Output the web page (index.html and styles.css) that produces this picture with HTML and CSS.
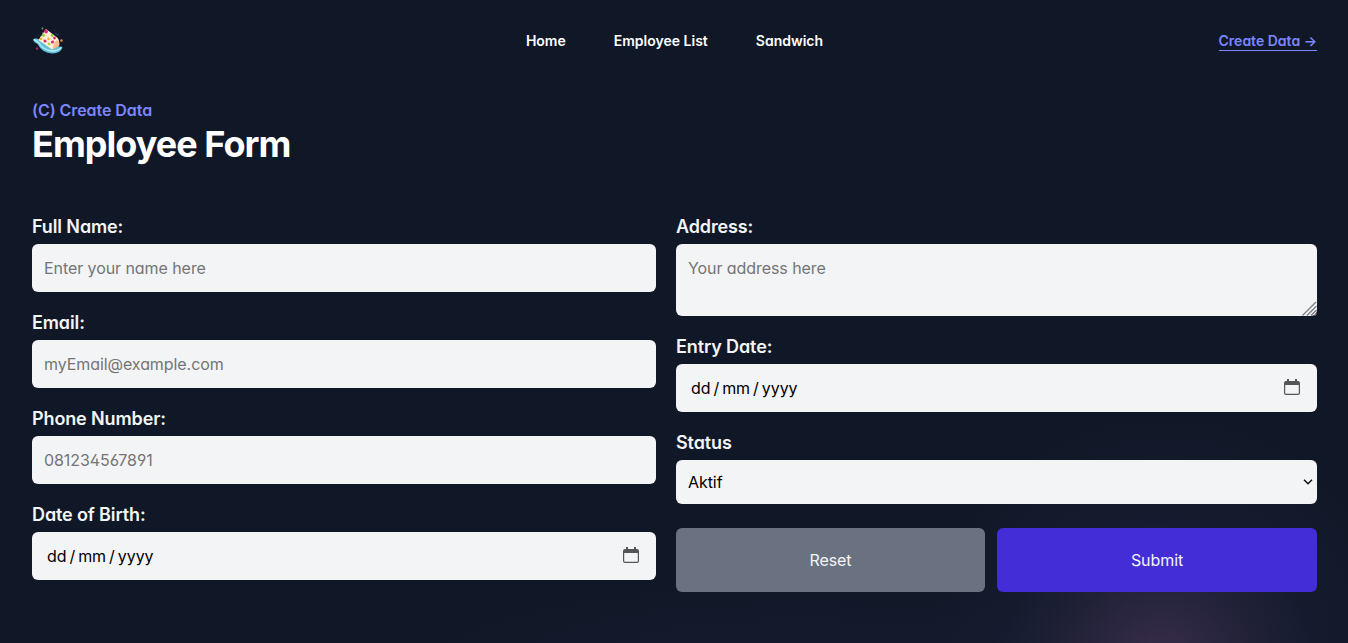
FILE: index.html
```html
<!DOCTYPE html>
<html lang="en">
<head>
<meta charset="utf-8">
<title>Employee Form</title>
<link rel="stylesheet" href="styles.css">
</head>
<body>
<div class="page">
  <header class="navbar">
    <a class="logo" href="#">
      <svg width="32" height="32" viewBox="0 0 32 32">
        <path d="M1 15.500Q2 14 5 14.600L23 23.500Q29 22 30.500 23Q29 29 20.500 29.500Q10 29 5.500 20Q1.500 18 1 15.500Z" fill="#62bfdc"/>
        <path d="M2 15.500Q5 17 7 19Q11 26 20 27Q26 27 29.500 23.500" fill="none" stroke="#b5edf4" stroke-width="1.400"/>
        <path d="M14 5L6.500 16L20 25.500L27 22Q28 16 25 13.500Z" fill="#fff0dc"/>
        <path d="M20 25.500L23 18Q25 15 26.500 17Q28 20 27 22Z" fill="#ffb988"/>
        <path d="M10.500 9L22 17.500M8.500 13L20 21.500" stroke="#f9ddb0" stroke-width="1"/>
        <circle cx="14" cy="7.500" r="1.900" fill="#df286f"/><circle cx="22.500" cy="14" r="1.400" fill="#df286f"/><circle cx="13" cy="17" r="1.500" fill="#df286f"/><circle cx="20.500" cy="18" r="1.600" fill="#df286f"/>
        <circle cx="11.500" cy="11.500" r="1.400" fill="#91cb35"/><circle cx="20" cy="11.500" r="1.400" fill="#91cb35"/><circle cx="17" cy="20" r="1.300" fill="#a6cf3d"/>
        <circle cx="9" cy="15" r="1.200" fill="#ffa83c"/><circle cx="16.500" cy="15" r="1.200" fill="#ffa83c"/><circle cx="29.500" cy="16.500" r="1.300" fill="#db8d3d"/>
        <circle cx="5" cy="24.500" r="1.200" fill="#b32362"/><circle cx="10.500" cy="4.500" r=".9" fill="#75a83d"/>
        <path d="M23 9l3 2M27 9l-2 3M5 11h2M22 6h1" stroke="#17364c" stroke-width="1.200"/>
      </svg>
    </a>
    <nav class="links">
      <a href="#">Home</a><a href="#">Employee List</a><a href="#">Sandwich</a>
    </nav>
    <div class="action"><a class="create" href="#">Create Data <span>→</span></a></div>
  </header>
  <main class="content">
    <p class="eyebrow">(C) Create Data</p>
    <h1 class="title">Employee Form</h1>
    <form class="form">
      <div class="column">
        <div class="field"><label for="name">Full Name:</label><input class="control" id="name" type="text" placeholder="Enter your name here"></div>
        <div class="field"><label for="email">Email:</label><input class="control" id="email" type="email" placeholder="myEmail@example.com"></div>
        <div class="field"><label for="phone">Phone Number:</label><input class="control" id="phone" type="tel" placeholder="081234567891"></div>
        <div class="field"><label>Date of Birth:</label>
          <div class="control date"><span class="parts"><span>dd</span><span>/</span><span>mm</span><span>/</span><span>yyyy</span></span>
            <svg class="calendar" width="16" height="16" viewBox="0 0 16 16"><path d="M3 0h2v2h6V0h2v2h1q2 0 2 2v10q0 2-2 2H2q-2 0-2-2V4q0-2 2-2h1zM1.200 6v8q0 .8.8.8h12q.8 0 .8-.8V6z" fill="#555" fill-rule="evenodd"/></svg></div>
        </div>
      </div>
      <div class="column right">
        <div class="field overlay-field"><label for="address">Address:</label><textarea class="control address" id="address" placeholder="Your address here"></textarea>
          <svg class="grip" width="15" height="15" viewBox="0 0 15 15"><path d="M0.500 14.500L14 1M5 14.500L14.500 5M9 14.500L14.500 9M12.500 14.500L14.500 12.500" stroke="#777b82" stroke-width="1.300"/></svg></div>
        <div class="field"><label>Entry Date:</label>
          <div class="control date"><span class="parts"><span>dd</span><span>/</span><span>mm</span><span>/</span><span>yyyy</span></span>
            <svg class="calendar" width="16" height="16" viewBox="0 0 16 16"><path d="M3 0h2v2h6V0h2v2h1q2 0 2 2v10q0 2-2 2H2q-2 0-2-2V4q0-2 2-2h1zM1.200 6v8q0 .8.8.8h12q.8 0 .8-.8V6z" fill="#555" fill-rule="evenodd"/></svg></div>
        </div>
        <div class="field overlay-field"><label for="status">Status</label><select class="control select" id="status"><option>Aktif</option></select>
          <svg class="chevron" width="10" height="6" viewBox="0 0 10 6"><path d="M1 .8L5 4.800L9 .8" fill="none" stroke="#111" stroke-width="1.500"/></svg></div>
        <div class="buttons"><button class="button reset" type="reset">Reset</button><button class="button submit" type="button">Submit</button></div>
      </div>
    </form>
  </main>
</div>
</body>
</html>
```
FILE: styles.css
```css
*, *::before, *::after { box-sizing: border-box; }
body {
  margin: 0;
  background: #101828;
  color: #fff;
  font-family: Inter, "Liberation Sans", sans-serif;
  font-size: 16px;
  line-height: 24px;
  font-feature-settings: "cv02", "cv03", "cv04", "cv11";
}
a { color: inherit; text-decoration: none; }
h1, p { margin: 0; }
.page {
  height: 643px;
  overflow: hidden;
  padding: 0 31px 0 32px;
  background:
    radial-gradient(ellipse 170px 150px at 1160px 660px, rgba(224, 112, 177, .16), rgba(224, 112, 177, .055) 55%, transparent),
    radial-gradient(ellipse 240px 240px at 1165px 650px, rgba(144, 137, 252, .07), rgba(144, 137, 252, .025) 60%, transparent),
    radial-gradient(ellipse 400px 80px at 800px 660px, rgba(144, 137, 252, .025), transparent),
    #101828;
}
.navbar { display: flex; align-items: center; height: 80px; padding-top: 1px; }
.logo { flex: 1; display: flex; padding-bottom: 2px; }
.logo svg { display: block; }
.links { display: flex; gap: 48px; font-size: 14px; font-weight: 600; }
.action { flex: 1; display: flex; justify-content: flex-end; padding-top: 2px; }
.create { font-size: 14px; line-height: 18px; font-weight: 600; color: #7c86ff; border-bottom: 1px solid #7c86ff; }
.content { padding-top: 18px; }
.eyebrow { color: #7c86ff; font-weight: 600; letter-spacing: -.06px; }
.title { font-size: 36px; line-height: 45px; font-weight: 700; letter-spacing: -.97px; }
.form { display: flex; gap: 20px; margin-top: 46px; }
.column { width: 624px; display: flex; flex-direction: column; gap: 20px; }
.right { width: 641px; }
.field { display: flex; flex-direction: column; }
.field label { font-size: 18px; line-height: 28px; font-weight: 600; letter-spacing: -.12px; color: #f3f4f6; margin-bottom: 3px; }
.field + .field { margin-top: -3px; }
.control {
  display: block; width: 100%; height: 48px; margin: 0; padding: 12px;
  border: 0; border-radius: 6px; background: #f3f4f6; color: #000;
  font: inherit; font-feature-settings: inherit; letter-spacing: -.07px; outline: 0;
}
.control::placeholder { color: #757575; opacity: 1; }
.overlay-field { position: relative; }
.address { height: 72px; resize: none; }
.grip { position: absolute; right: 0; bottom: 0; }
.select { height: 44px; padding: 8px 12px; appearance: none; }
.chevron { position: absolute; right: 4px; bottom: 19px; pointer-events: none; }
.date { display: flex; align-items: center; justify-content: space-between; padding: 0 17px 0 15px; }
.parts { display: flex; gap: 3px; }
.calendar { display: block; margin-bottom: 2px; }
.buttons { display: flex; gap: 12px; margin-top: 4px; }
.button { height: 64px; border: 0; border-radius: 6px; padding: 0; color: #f3f4f6; font: inherit; font-feature-settings: inherit; letter-spacing: -.07px; }
.reset { width: 309px; background: #6a7282; }
.submit { width: 320px; background: #432dd7; }
```
